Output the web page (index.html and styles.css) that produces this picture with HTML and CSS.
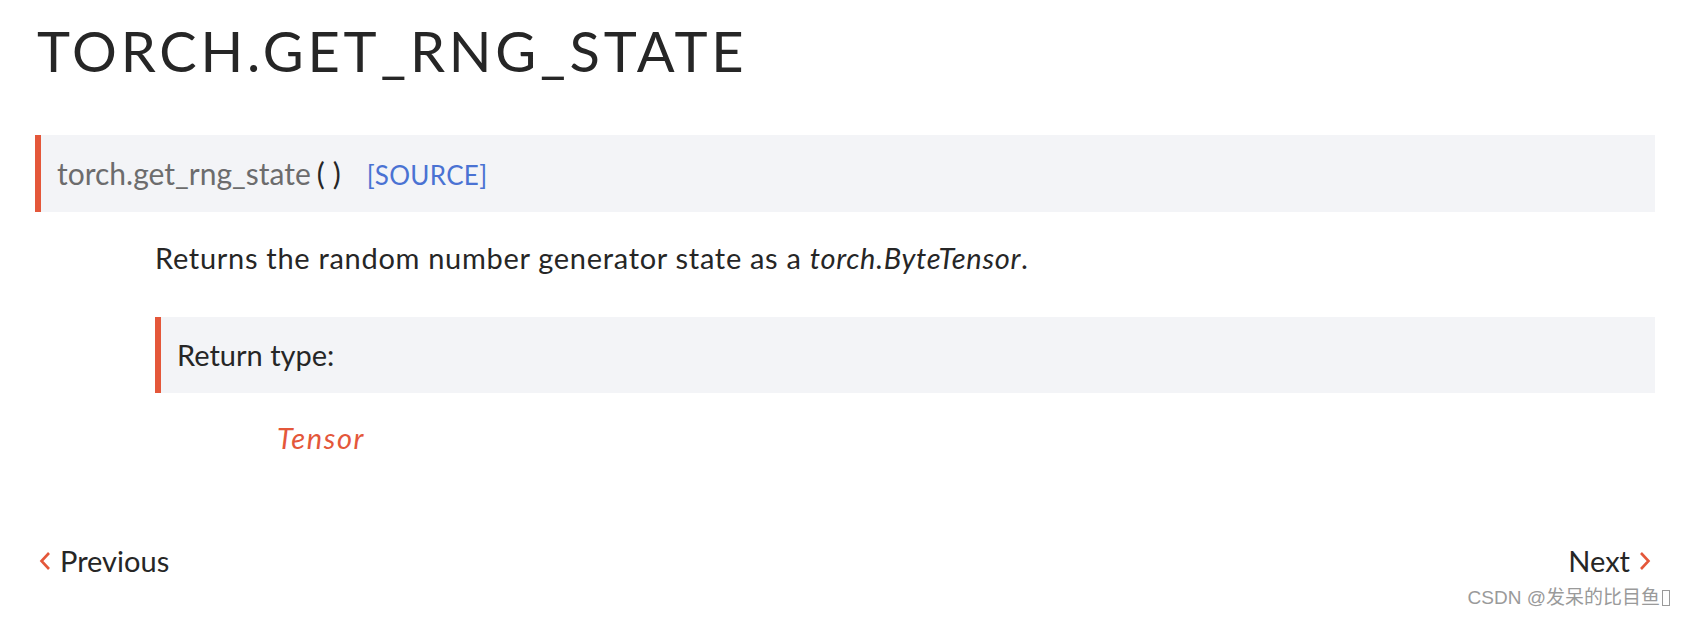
FILE: index.html
```html
<!DOCTYPE html>
<html lang="en">
<head>
<meta charset="utf-8">
<title>torch.get_rng_state</title>
<link rel="stylesheet" href="styles.css">
</head>
<body>
<main class="page">
  <h1 class="title">TORCH.GET_RNG_STATE</h1>
  <dl class="func">
    <dt class="sig"><span class="sig-name">torch.get_rng_state</span><span class="sig-paren">()</span><a class="source" href="#">[SOURCE]</a></dt>
    <dd class="func-body">
      <p class="desc">Returns the random number generator state as a <em>torch.ByteTensor</em>.</p>
      <dl class="field">
        <dt class="field-name">Return type:</dt>
        <dd class="field-body"><em>Tensor</em></dd>
      </dl>
    </dd>
  </dl>
  <nav class="pager">
    <a class="pager-link" href="#"><svg class="chev" width="12" height="20" viewBox="0 0 12 20"><polyline points="10,2 2.5,10 10,18" fill="none" stroke="#e4573a" stroke-width="2.6"/></svg><span>Previous</span></a>
    <a class="pager-link" href="#"><span>Next</span><svg class="chev" width="12" height="20" viewBox="0 0 12 20"><polyline points="2,2 9.5,10 2,18" fill="none" stroke="#e4573a" stroke-width="2.6"/></svg></a>
  </nav>
  <div class="watermark">CSDN @发呆的比目鱼<span class="tofu"></span></div>
</main>
</body>
</html>
```
FILE: styles.css
```css
html, body {
  margin: 0;
  padding: 0;
  background: #ffffff;
}
body {
  font-family: Lato, "Noto Sans", sans-serif;
  color: #262626;
}
.page {
  position: relative;
  display: flow-root;
  height: 618px;
  box-sizing: border-box;
  padding: 17px 29px 0 35px;
}
.title {
  margin: 0 0 0 2px;
  font-size: 56px;
  line-height: 68px;
  font-weight: 400;
  letter-spacing: 3.8px;
  color: #262626;
}
.func {
  margin: 50px 0 0;
}
.sig {
  height: 77px;
  line-height: 77px;
  background: #f3f4f7;
  border-left: 6px solid #e4573a;
  padding-left: 16px;
  font-size: 30px;
  white-space: nowrap;
}
.sig-name {
  color: #6c6c6d;
}
.sig-paren {
  color: #262626;
  margin-left: 6px;
  letter-spacing: 8px;
}
.source {
  color: #4a72d3;
  text-decoration: none;
  font-size: 26px;
  letter-spacing: 0.3px;
  margin-left: 18px;
}
.func-body {
  margin: 0 0 0 120px;
}
.desc {
  margin: 26px 0 0;
  font-size: 29px;
  line-height: 40px;
  letter-spacing: 0.7px;
}
.desc em {
  font-style: italic;
}
.field {
  margin: 39px 0 0;
}
.field-name {
  height: 76px;
  line-height: 76px;
  background: #f3f4f7;
  border-left: 6px solid #e4573a;
  padding-left: 16px;
  font-size: 29px;
  font-weight: 400;
}
.field-body {
  margin: 25px 0 0 122px;
  font-size: 29px;
  line-height: 40px;
  letter-spacing: 1.6px;
  color: #e4573a;
}
.pager {
  margin-top: 83px;
  display: flex;
  justify-content: space-between;
  align-items: center;
  font-size: 29px;
  line-height: 40px;
}
.pager-link {
  display: flex;
  align-items: center;
  gap: 9px;
  color: #262626;
  text-decoration: none;
}
.pager-link:first-child {
  margin-left: 4px;
}
.pager-link:last-child {
  margin-right: 4px;
}
.chev {
  display: block;
}
.watermark {
  position: absolute;
  right: 14px;
  bottom: 8px;
  font-family: "Liberation Sans", "Noto Sans CJK SC", sans-serif;
  font-size: 19px;
  line-height: 24px;
  color: #9a9a9a;
  display: flex;
  align-items: center;
}
.tofu {
  display: inline-block;
  width: 6px;
  height: 14px;
  border: 1px solid #9a9a9a;
  margin-left: 2px;
}
```
